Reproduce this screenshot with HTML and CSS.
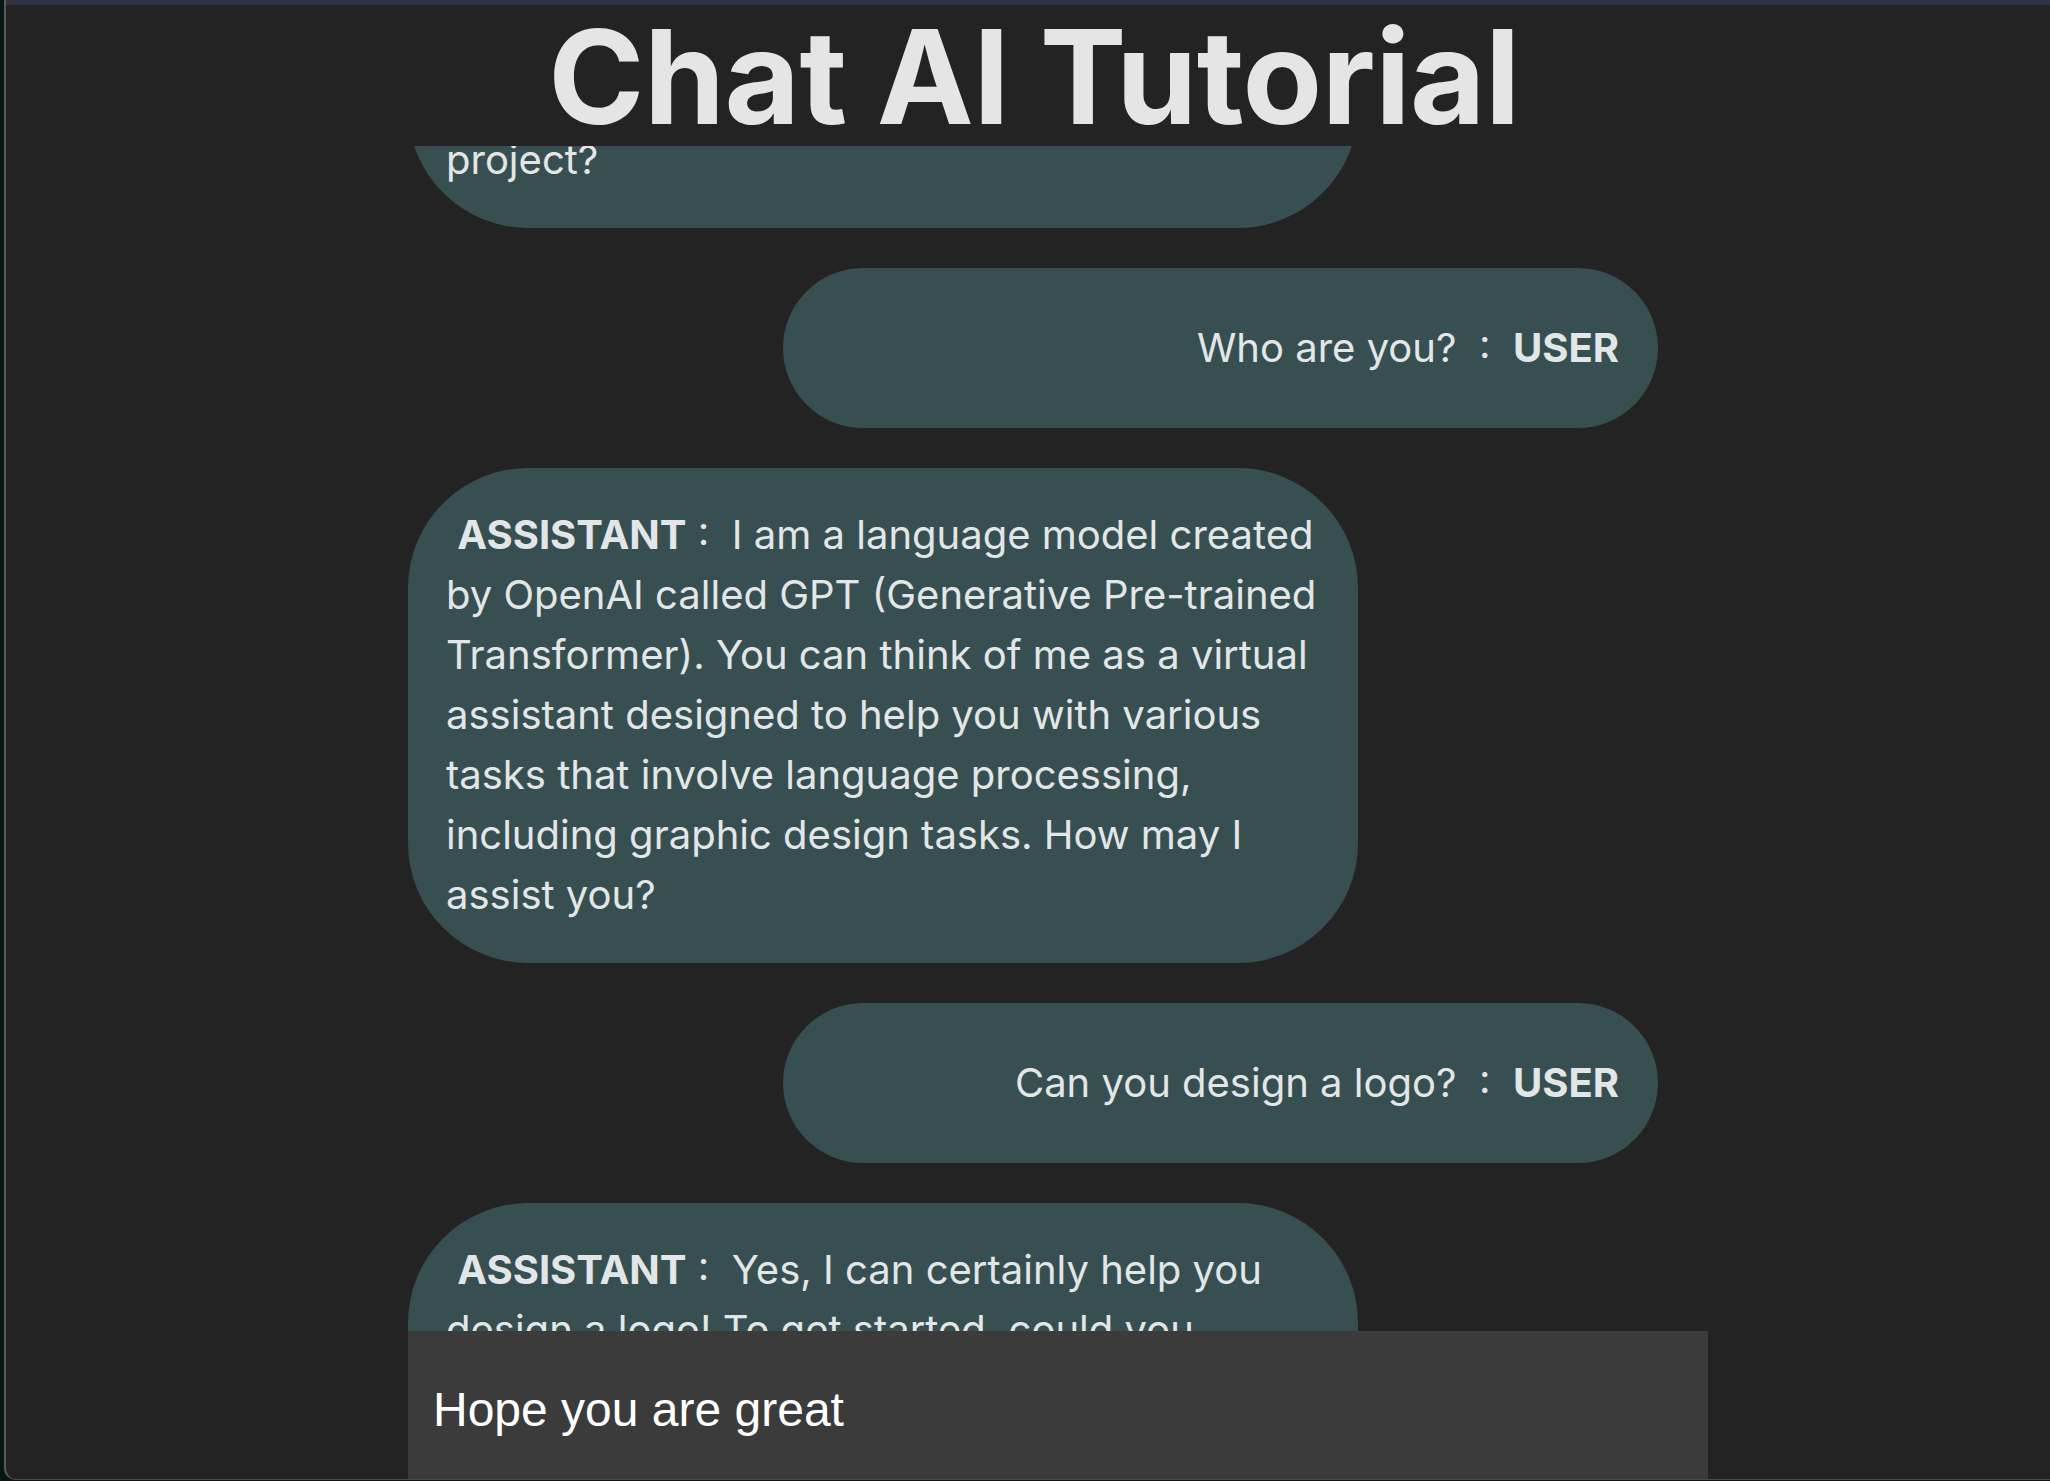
FILE: index.html
```html
<!DOCTYPE html>
<html lang="en">
<head>
<meta charset="utf-8">
<title>Chat AI Tutorial</title>
<link rel="stylesheet" href="styles.css">
</head>
<body>
<div class="window">
  <div class="topbar"></div>
  <header class="title">Chat AI Tutorial</header>
  <div class="column">
    <main class="chat">
      <div class="messages">
        <div class="bubble assistant">&nbsp;<b>ASSISTANT</b>&nbsp;:&nbsp; Absolutely! Before we begin, could you tell me about your business or project?</div>
        <div class="bubble user">Who are you?&nbsp; :&nbsp; <b>USER</b></div>
        <div class="bubble assistant">&nbsp;<b>ASSISTANT</b>&nbsp;:&nbsp; I am a language model created by OpenAI called GPT (Generative Pre-trained Transformer). You can think of me as a virtual assistant designed to help you with various tasks that involve language processing, including graphic design tasks. How may I assist you?</div>
        <div class="bubble user">Can you design a logo?&nbsp; :&nbsp; <b>USER</b></div>
        <div class="bubble assistant">&nbsp;<b>ASSISTANT</b>&nbsp;:&nbsp; Yes, I can certainly help you design a logo! To get started, could you provide some details about your business or project?</div>
      </div>
    </main>
    <form class="composer">
      <input class="prompt" type="text" value="Hope you are great" autofocus>
    </form>
  </div>
</div>
</body>
</html>
```
FILE: styles.css
```css
* { box-sizing: border-box; }
html, body { margin: 0; padding: 0; }
body {
  background: #0a1613;
  height: 1481px;
  overflow: hidden;
  font-family: Inter, "Noto Sans", sans-serif;
}
.window {
  margin-left: 4px;
  height: 1480px;
  background: #232323;
  border-left: 2px solid #5a5a5a;
  border-bottom: 1px solid #4a4a4a;
  border-bottom-left-radius: 12px;
  display: flex;
  flex-direction: column;
  overflow: hidden;
}
.topbar {
  height: 5px;
  flex: none;
  background: #2f3344;
}
.title {
  flex: none;
  height: 141px;
  line-height: 144px;
  text-align: center;
  font-size: 130px;
  font-weight: 700;
  color: #e5e5e5;
  letter-spacing: -0.5px;
  padding-left: 12px;
}
.column {
  flex: 1;
  min-height: 0;
  width: 1300px;
  margin-left: 402px;
  display: flex;
  flex-direction: column;
}
.chat {
  flex: 1;
  min-height: 0;
  overflow: hidden;
}
.messages {
  display: flex;
  flex-direction: column;
  gap: 40px;
  margin-top: -173px;
}
.bubble {
  background: #374f51;
  color: #e3e6e6;
  font-size: 40px;
  line-height: 60px;
  border-radius: 120px;
}
.bubble b { font-weight: 700; }
.assistant {
  align-self: flex-start;
  width: 950px;
  padding: 37px 28px 38px 38px;
}
.user {
  align-self: flex-end;
  width: 875px;
  margin-right: 50px;
  padding: 50px 39px;
  text-align: right;
}
.composer {
  flex: none;
  height: 148px;
  margin: 0;
  background: #3b3b3b;
  display: flex;
  align-items: center;
}
.prompt {
  width: 100%;
  height: 100%;
  border: 0;
  outline: 0;
  background: transparent;
  color: #ffffff;
  caret-color: #ffffff;
  font-family: "Liberation Sans", Arial, sans-serif;
  font-size: 48px;
  padding: 8px 25px 0;
}
```
